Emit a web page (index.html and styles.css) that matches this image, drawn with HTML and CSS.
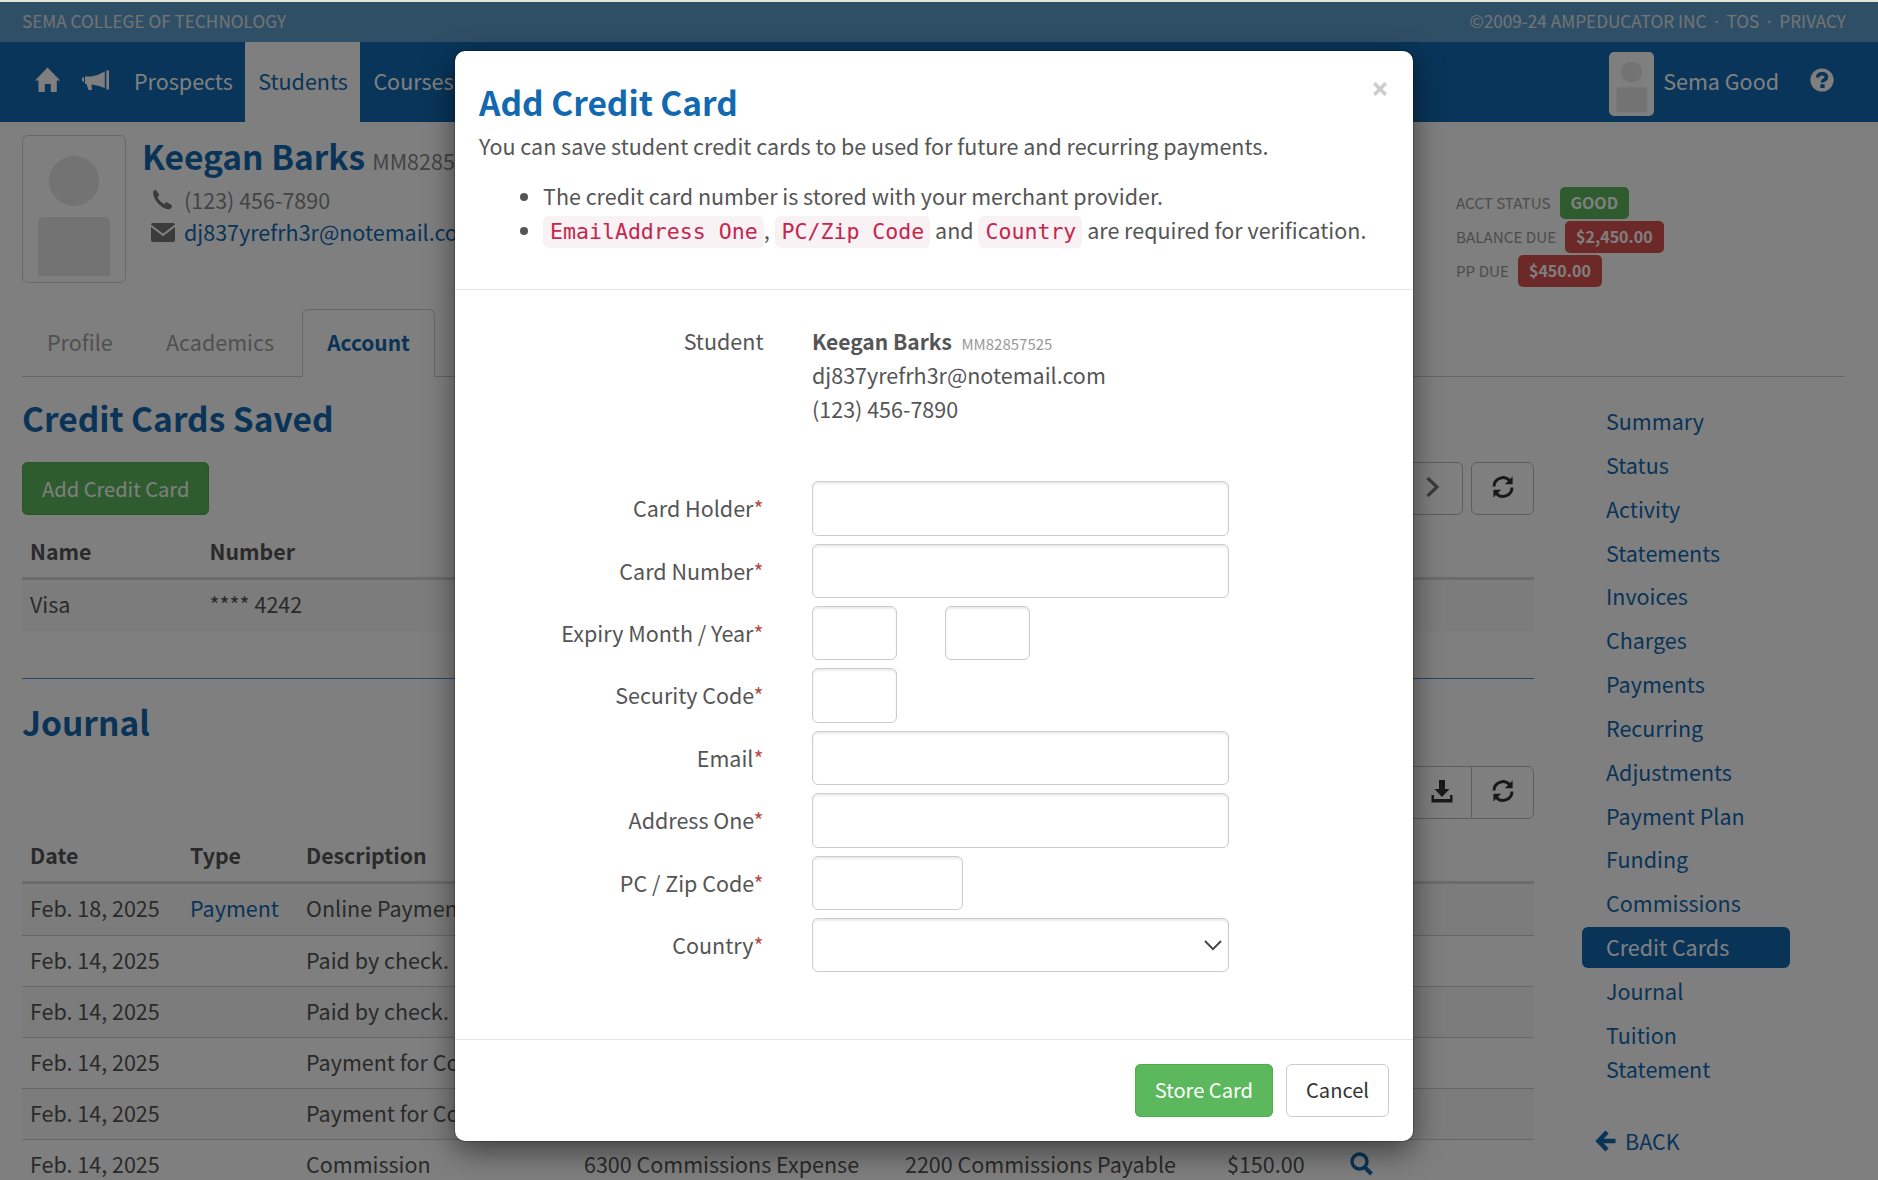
FILE: index.html
```html
<!DOCTYPE html>
<html lang="en">
<head>
<meta charset="utf-8">
<title>Add Credit Card</title>
<link rel="stylesheet" href="styles.css">
</head>
<body>
<svg class="defs" width="0" height="0">
  <symbol id="refresh" viewBox="0 0 22 22">
    <path d="M2 10.6A9 9 0 0 1 17.6 4.6" fill="none" stroke="currentColor" stroke-width="3"/>
    <path d="M20.6.4V8.2H12.8z" fill="currentColor"/>
    <path d="M20 11.4A9 9 0 0 1 4.4 17.4" fill="none" stroke="currentColor" stroke-width="3"/>
    <path d="M1.4 21.6V13.8H9.2z" fill="currentColor"/>
  </symbol>
  <symbol id="person" viewBox="0 0 102 146">
    <circle cx="51" cy="45" r="25"/>
    <path d="M15 140V87q0-6 6-6h60q6 0 6 6v53z"/>
  </symbol>
</svg>

<div class="page">
  <div class="topbar">
    <span>SEMA COLLEGE OF TECHNOLOGY</span>
    <span class="legal">©2009-24 AMPEDUCATOR INC<i>·</i>TOS<i>·</i>PRIVACY</span>
  </div>
  <nav class="navbar">
    <svg class="home" width="26" height="26" viewBox="0 0 26 26"><path d="M12.500.500 25.200 13.500H21.800V25H15.800V17H9.800V25H3.500V13.500H0z" fill="currentColor"/></svg>
    <svg class="horn" width="28" height="22" viewBox="0 0 28 22"><path d="M0 8.500Q.3 7.200 2 7v5Q.3 11.800 0 10.500zM3 6.500H9Q16 5.500 22.800 1.500v16.500Q16 15 9.500 14.500L9.900 20H6.500L4.500 14H3zM24.300 .500H27v19h-2.700z" fill="currentColor"/></svg>
    <a class="nav-link prospects">Prospects</a>
    <a class="nav-link active">Students</a>
    <a class="nav-link">Courses</a>
    <div class="user">
      <span class="avatar-sm"><svg width="43" height="62"><use href="#person"/></svg></span>
      <span>Sema Good</span>
      <svg class="help" width="24" height="24" viewBox="0 0 24 24"><circle cx="12" cy="12" r="11.600" fill="currentColor"/><path d="M7.600 9.600Q7.600 5.800 12 5.800T16.400 9.200Q16.400 11 13.900 12.200Q12.500 12.900 12.500 14.600" class="q" fill="none" stroke-width="3.600"/><path d="M10.300 16.200h4.300v3.800h-4.300z" class="dot"/></svg>
    </div>
  </nav>

  <header class="profile">
    <div class="photo"><svg width="102" height="146"><use href="#person"/></svg></div>
    <div class="who">
      <div class="name"><b>Keegan Barks</b><span>MM82857525</span></div>
      <div class="contact"><svg width="26" height="22" viewBox="0 0 26 22"><path d="M3 3Q3.500 1 6 1L9.300 6 7.500 8.500Q9.500 12.500 14 15L16.500 13 22 16.300Q22 19.500 19 20.200Q14.500 20.500 9 15.500Q3 9.500 3 3z" fill="currentColor"/></svg><span>(123) 456-7890</span></div>
      <div class="contact"><svg width="26" height="22" viewBox="0 0 26 22"><path d="M1 3.500Q1 2 2.500 2H23.500q1.500 0 1.500 1.500L13 12.500zM1 6 13 15.300 25 6V19q0 2-2 2H3q-2 0-2-2z" fill="currentColor"/></svg><a>dj837yrefrh3r@notemail.com</a></div>
    </div>
    <div class="status">
      <div><span>ACCT STATUS</span><b class="good">GOOD</b></div>
      <div><span>BALANCE DUE</span><b>$2,450.00</b></div>
      <div><span>PP DUE</span><b>$450.00</b></div>
    </div>
  </header>

  <div class="tabs">
    <a class="t1">Profile</a><a class="t2">Academics</a><a class="current">Account</a>
  </div>

  <div class="columns">
    <main>
      <h2>Credit Cards Saved</h2>
      <div class="toolbar">
        <span class="btn success">Add Credit Card</span>
        <div class="tools">
          <span class="tool pager"><svg width="14" height="20" viewBox="0 0 14 20"><path d="M1.500 1 11 10 1.500 19" fill="none" stroke="currentColor" stroke-width="3.200"/></svg></span>
          <span class="tool"><svg width="22" height="22"><use href="#refresh"/></svg></span>
        </div>
      </div>
      <table class="cards">
        <tr><th class="c-name">Name</th><th>Number</th></tr>
        <tr><td>Visa</td><td>**** 4242</td></tr>
      </table>
      <hr>
      <h2>Journal</h2>
      <div class="toolbar journal-tools">
        <div class="tools joined">
          <span class="tool"><svg width="22" height="23" viewBox="0 0 22 23"><path d="M8 0h6v9h4.500L11 17 3.500 9H8zM.5 15H3v4H19V15h2.500v7.500H.5z" fill="currentColor"/></svg></span>
          <span class="tool"><svg width="22" height="22"><use href="#refresh"/></svg></span>
        </div>
      </div>
      <table class="journal">
        <colgroup><col style="width:160px"><col style="width:116px"><col style="width:278px"><col style="width:321px"><col style="width:322px"><col style="width:123px"><col></colgroup>
        <tr><th>Date</th><th>Type</th><th>Description</th><th></th><th></th><th></th><th></th></tr>
        <tr><td>Feb. 18, 2025</td><td><a>Payment</a></td><td>Online Payment</td><td></td><td></td><td></td><td></td></tr>
        <tr><td>Feb. 14, 2025</td><td></td><td>Paid by check.</td><td></td><td></td><td></td><td></td></tr>
        <tr><td>Feb. 14, 2025</td><td></td><td>Paid by check.</td><td></td><td></td><td></td><td></td></tr>
        <tr><td>Feb. 14, 2025</td><td></td><td>Payment for Courses</td><td></td><td></td><td></td><td></td></tr>
        <tr><td>Feb. 14, 2025</td><td></td><td>Payment for Courses</td><td></td><td></td><td></td><td></td></tr>
        <tr><td>Feb. 14, 2025</td><td></td><td>Commission</td><td>6300 Commissions Expense</td><td>2200 Commissions Payable</td><td>$150.00</td><td><a><svg class="search" width="24" height="25" viewBox="0 -1 24 25"><circle cx="9.500" cy="9.500" r="7.500" fill="none" stroke="currentColor" stroke-width="3.400"/><path d="M14.500 15 21.500 22" stroke="currentColor" stroke-width="4"/></svg></a></td></tr>
      </table>
    </main>
    <aside>
      <a>Summary</a><a>Status</a><a>Activity</a><a>Statements</a><a>Invoices</a><a>Charges</a><a>Payments</a><a>Recurring</a><a>Adjustments</a><a>Payment Plan</a><a>Funding</a><a>Commissions</a><a class="selected">Credit Cards</a><a>Journal</a><a>Tuition Statement</a>
      <div class="back"><svg width="22" height="22" viewBox="0 0 22 22"><path d="M12 2 3.500 11 12 20M3 11H20.500" fill="none" stroke="currentColor" stroke-width="4.600"/></svg><span>BACK</span></div>
    </aside>
  </div>
</div>

<div class="backdrop">
  <section class="modal">
    <div class="modal-head">
      <span class="close"><svg width="14" height="14" viewBox="0 0 14 14"><path d="M1.300 1.300 12.700 12.700M12.700 1.300 1.300 12.700" stroke="currentColor" stroke-width="3.600"/></svg></span>
      <h1>Add Credit Card</h1>
      <p>You can save student credit cards to be used for future and recurring payments.</p>
      <ul>
        <li>The credit card number is stored with your merchant provider.</li>
        <li><code>EmailAddress One</code>, <code>PC/Zip Code</code> and <code>Country</code> are required for verification.</li>
      </ul>
    </div>
    <div class="modal-body">
      <div class="row info"><label>Student</label><div><b>Keegan Barks</b><small>MM82857525</small><br>dj837yrefrh3r@notemail.com<br>(123) 456-7890</div></div>
      <div class="row"><label>Card Holder<em>*</em></label><input></div>
      <div class="row"><label>Card Number<em>*</em></label><input></div>
      <div class="row"><label>Expiry Month / Year<em>*</em></label><input class="short"><input class="short"></div>
      <div class="row"><label>Security Code<em>*</em></label><input class="short"></div>
      <div class="row"><label>Email<em>*</em></label><input></div>
      <div class="row"><label>Address One<em>*</em></label><input></div>
      <div class="row"><label>PC / Zip Code<em>*</em></label><input class="zip"></div>
      <div class="row"><label>Country<em>*</em></label><div class="select"><svg width="18" height="11" viewBox="0 0 18 11"><path d="M1 1 9 9.200 17 1" fill="none" stroke="currentColor" stroke-width="1.900"/></svg></div></div>
    </div>
    <div class="modal-foot">
      <span class="btn success">Store Card</span>
      <span class="btn plain">Cancel</span>
    </div>
  </section>
</div>
</body>
</html>
```
FILE: styles.css
```css
* { box-sizing: border-box; }
body {
  margin: 0;
  width: 1878px;
  height: 1180px;
  overflow: hidden;
  position: relative;
  background: #e4e7d8;
  color: #555;
  font: 21.500px/34px "Noto Sans CJK SC", "Open Sans", sans-serif;
}
.defs { position: absolute; }
svg { display: block; flex: none; }
a { color: #1269b0; }
h1, h2 { margin: 0; color: #1269b0; font-size: 33.500px; font-weight: 600; line-height: 40px; }
b, th { font-weight: 600; }
b { font-size: 21px; }

.page { margin-top: 2px; height: 1178px; overflow: hidden; background: #fff; }
.topbar {
  height: 40px;
  padding: 0 32px 0 22px;
  display: flex;
  justify-content: space-between;
  background: #5e9fcd;
  color: #e4e8ec;
  font-size: 17.200px;
  line-height: 37px;
}
.topbar i { display: inline-block; width: 20px; text-align: center; font: 17px/20px "Noto Sans", sans-serif; }
.navbar {
  height: 80px;
  display: flex;
  background: #106ab2;
  color: #fff;
  line-height: 78px;
}
.home { margin: 25px 0 0 35px; }
.horn { margin: 28px 11px 0 21px; }
.nav-link { color: #fff; padding: 0 13px; }
.nav-link.active { background: #fff; color: #1269b0; padding: 0 12.500px 0 13px; }
.nav-link.prospects { padding-right: 12.500px; }
.user { margin-left: auto; padding-right: 44px; display: flex; }
.avatar-sm {
  width: 45px; height: 64px;
  margin: 10px 9px 0 0;
  padding: 1px;
  background: #fff;
  border-radius: 5px;
}
.avatar-sm svg, .photo svg { fill: #e6e6e6; }
.help { margin: 26px 0 0 31px; }
.help .q { stroke: #106ab2; }
.help .dot { fill: #106ab2; }

.profile { height: 187px; padding: 13px 22px 0; display: flex; }
.photo { width: 104px; height: 148px; border: 1px solid #d0d0d0; border-radius: 6px; }
.who { margin-left: 16px; width: 1314px; }
.name { line-height: 42px; height: 49px; white-space: nowrap; }
.name b { font-size: 33.500px; color: #1269b0; }
.name span { margin-left: 7px; color: #888; }
.contact { display: flex; align-items: center; height: 32px; gap: 8px; padding-left: 8px; color: #777; line-height: 32px; }
.contact span { color: #888; }
.status { padding-top: 50px; font-size: 15.2px; color: #999; }
.status div { height: 34px; display: flex; align-items: center; line-height: 32px; }
.status b { margin: 2px 0 0 9px; padding: 0 11px; height: 32px; border-radius: 5px; background: #d9534f; color: #fff; font-size: 16px; line-height: 31px; }
.status .good { background: #5cb85c; }

.tabs { height: 68px; margin: 0 33px 0 22px; display: flex; border-bottom: 1px solid #ccc; line-height: 65px; }
.tabs a { color: #a0a0a0; }
.t1 { padding-left: 25px; width: 144px; }
.t2 { width: 136px; }
.tabs .current { height: 68px; width: 133px; text-align: center; border: 1px solid #ccc; border-bottom-color: #fff; border-radius: 6px 6px 0 0; background: #fff; color: #1269b0; font-size: 20.900px; font-weight: 600; line-height: 64px; }

.columns { display: flex; padding-left: 22px; }
main { width: 1512px; }
main h2 { padding-top: 21px; height: 85px; }
.toolbar { height: 53px; display: flex; justify-content: space-between; }
.btn { height: 53px; line-height: 53px; padding: 0 20px; border-radius: 6px; font-size: 20.100px; }
.success { background: #5cb85c; color: #fff; box-shadow: inset 0 0 0 1px #4cae4c; }
.plain { border: 1px solid #ccc; color: #333; padding: 0 19px; }
.tools { display: flex; gap: 8px; margin-left: auto; }
.tool { width: 63px; height: 53px; border: 1px solid #bbb; border-radius: 6px; display: flex; align-items: center; justify-content: center; color: #333; padding-bottom: 3px; }
.pager { color: #777; padding-left: 3px; }
.joined { gap: 0; }
.joined .tool:first-child { border-right: 0; border-radius: 6px 0 0 6px; width: 64px; padding-left: 5px; }
.joined .tool:last-child { border-radius: 0 6px 6px 0; }
table { width: 100%; border-collapse: separate; border-spacing: 0; table-layout: fixed; }
th { font-size: 21.300px; text-align: left; padding: 0 8px; height: 65px; line-height: 34px; padding-top: 9px; vertical-align: middle; border-bottom: 3px solid #d8d8d8; }
td { height: 51px; padding: 0 8px 3px; line-height: 34px; white-space: nowrap; }
.cards .c-name { width: 179.500px; }
.cards td { background: #f9f9f9; }
hr { margin: 47px 0 0; border: 0; border-top: 1px solid #4990cc; height: 2px; }
hr + h2 { height: 86px; padding-top: 22px; }
.journal tr:nth-child(even) td { background: #f9f9f9; }
.journal tr:nth-child(n+3) td { border-top: 1px solid #ccc; }

aside { margin-left: 48px; width: 208px; padding-top: 24px; }
aside a { display: block; padding: 3px 24px 4px; margin-bottom: 2.850px; line-height: 34px; }
aside .selected { background: #1269b0; color: #fff; border-radius: 6px; }
.back { display: flex; align-items: center; gap: 8px; padding-left: 13px; margin-top: 34.500px; color: #1269b0; }

.backdrop {
  position: absolute;
  left: 0; right: 0; top: 2px; bottom: 0;
  background: rgba(0, 0, 0, .5);
}
.modal {
  width: 958px; height: 1090px;
  margin: 49px 0 0 455px;
  background: #fff;
  border-radius: 10px;
  box-shadow: 0 10px 30px rgba(0, 0, 0, .5), 0 0 0 1px rgba(0, 0, 0, .2);
}
.modal-head { position: relative; height: 239px; padding: 31px 24px 0; border-bottom: 1px solid #e5e5e5; }
.close { position: absolute; right: 26px; top: 31px; color: #ccc; }
p { margin: 7px 0 16px; }
ul { margin: 0; padding-left: 64px; }
li { white-space: nowrap; }
code { font: 21.6px/26px "DejaVu Sans Mono", monospace; color: #c7254e; background: #f9f2f4; border-radius: 6px; padding: 3px 6px 4px 7px; letter-spacing: -.020px; }
.modal-body { height: 749px; padding-top: 34px; }
.row { display: flex; height: 62.400px; }
.row label { width: 308.500px; margin-right: 48.500px; text-align: right; line-height: 53px; }
.row.info { height: 157.300px; }
.row.info label { line-height: 33px; }
.row.info div { line-height: 34px; }
.info b { line-height: 20px; }
.info small { margin-left: 9.500px; font-size: 15px; line-height: 15px; color: #999; }
em { font-style: normal; color: #b94a48; }
input, .select { width: 417px; height: 54.400px; border: 1px solid #ccc; border-radius: 6px; background: #fff; box-shadow: inset 0 2px 2px rgba(0, 0, 0, .075); }
.short { width: 85px; margin-right: 48px; }
.zip { width: 151px; }
.select { display: flex; align-items: center; justify-content: flex-end; padding-right: 6px; color: #444; }
.modal-foot { height: 102px; padding: 24px 24px; display: flex; justify-content: flex-end; gap: 13px; border-top: 1px solid #e5e5e5; }
.modal-foot .success { line-height: 51px; }
.modal-foot .plain { line-height: 49px; }
```
